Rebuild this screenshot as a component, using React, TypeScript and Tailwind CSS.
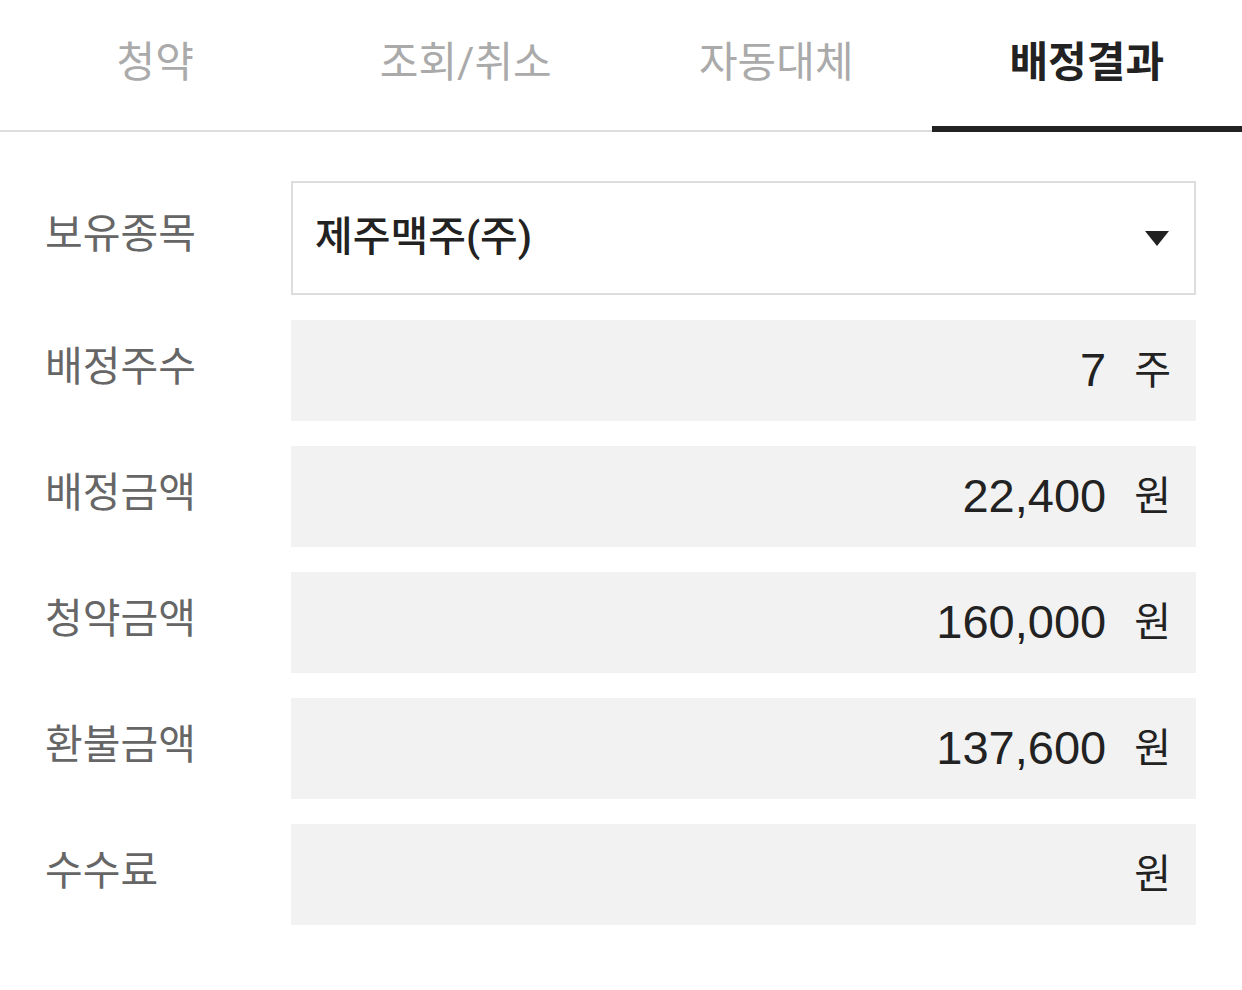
const tabs = ['청약', '조회/취소', '자동대체', '배정결과'];

const rows = [
  { label: '배정주수', value: '7', unit: '주' },
  { label: '배정금액', value: '22,400', unit: '원' },
  { label: '청약금액', value: '160,000', unit: '원' },
  { label: '환불금액', value: '137,600', unit: '원' },
  { label: '수수료', value: '', unit: '원' },
];

export default function App() {
  const active = 3;
  return (
    <div className="min-h-screen bg-white" style={{ fontFamily: 'Roboto, "Noto Sans CJK KR", sans-serif' }}>
      {/* Tabs */}
      <div className="flex border-b-2 border-[#dddddd]">
        {tabs.map((t, i) => (
          <div
            key={t}
            className={`flex-1 h-[132px] flex items-center justify-center text-[42px] -mb-[2px] border-b-[6px] ${
              i === active ? 'border-[#222222] text-[#222222] font-bold' : 'border-transparent text-[#aaaaaa]'
            }`}
          >
            <span className="-mt-[2px]">{t}</span>
          </div>
        ))}
      </div>

      <div className="pt-[49px] pr-[46px] flex flex-col gap-[25px]">
        {/* Holding select */}
        <div className="flex items-center">
          <div className="w-[291px] pl-[45px] text-[41px] text-[#666666] -mt-[6px]">보유종목</div>
          <div className="flex-1 h-[114px] border-2 border-[#dddddd] flex items-center justify-between pl-[22px] pr-[25px]">
            <span className="text-[41px] font-medium text-[#222222]">제주맥주(주)</span>
            <svg width="24" height="15" viewBox="0 0 24 15">
              <polygon points="0,0 24,0 12,15" fill="#222222" />
            </svg>
          </div>
        </div>

        {rows.map((r) => (
          <div key={r.label} className="flex items-center">
            <div className="w-[291px] pl-[45px] text-[41px] text-[#666666] -mt-[6px]">{r.label}</div>
            <div className="flex-1 h-[101px] bg-[#f2f2f2] flex items-center justify-end pr-[25px] gap-[28px]">
              {r.value && (
                <span className="text-[47px] text-[#222222]" style={{ fontFamily: '"Liberation Sans", sans-serif' }}>
                  {r.value}
                </span>
              )}
              <span className="text-[40px] text-[#222222]">{r.unit}</span>
            </div>
          </div>
        ))}
      </div>
    </div>
  );
}
